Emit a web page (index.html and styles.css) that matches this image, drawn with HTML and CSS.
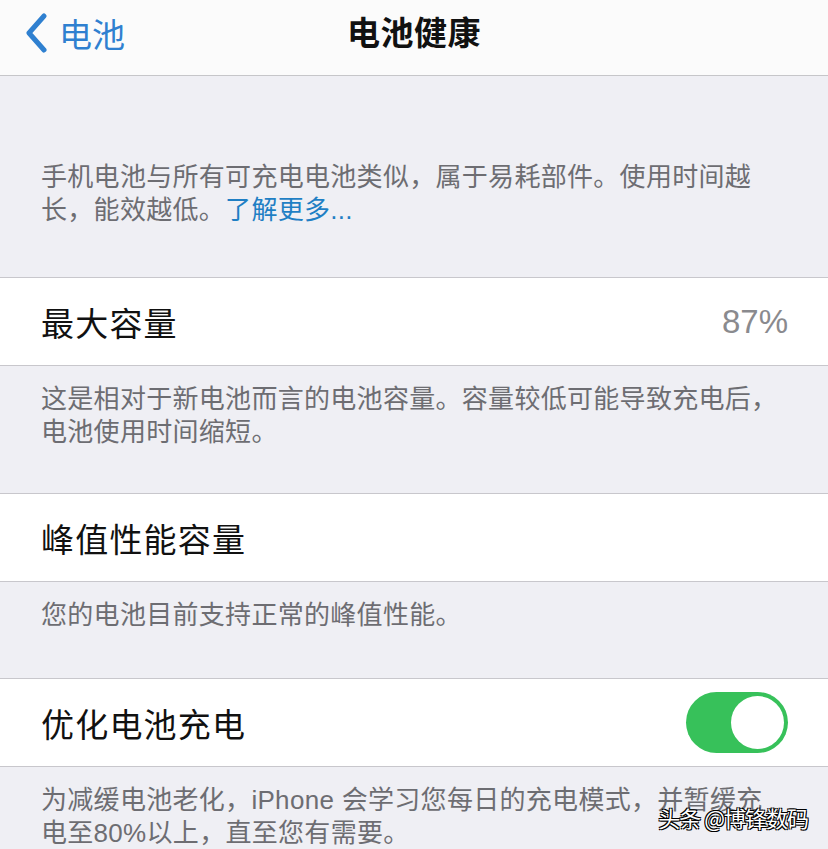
FILE: index.html
```html
<!DOCTYPE html>
<html lang="zh-CN">
<head>
    <meta charset="UTF-8">
    <meta name="viewport" content="width=device-width, initial-scale=1.0">
    <title>电池健康</title>
    <link rel="stylesheet" href="styles.css">
</head>
<body>
    <div class="screen">
        <div class="nav-bar">
            <a class="back-link" href="#">
                <svg class="back-icon" viewBox="0 0 24 40" width="24" height="40">
                    <path d="M20 3 L5 20 L20 37" fill="none" stroke="#2f80d0" stroke-width="5" stroke-linecap="round" stroke-linejoin="round"/>
                </svg>
                <span>电池</span>
            </a>
            <h1>电池健康</h1>
        </div>

        <div class="note note-intro">
            手机电池与所有可充电电池类似，属于易耗部件。使用时间越长，能效越低。<a href="#">了解更多...</a>
        </div>

        <div class="cell">
            <span class="cell-title">最大容量</span>
            <span class="cell-value">87%</span>
        </div>
        <div class="note">
            这是相对于新电池而言的电池容量。容量较低可能导致充电后，电池使用时间缩短。
        </div>

        <div class="cell">
            <span class="cell-title">峰值性能容量</span>
        </div>
        <div class="note note-single">
            您的电池目前支持正常的峰值性能。
        </div>

        <div class="cell">
            <span class="cell-title">优化电池充电</span>
            <label class="switch">
                <input type="checkbox" checked>
                <span class="knob"></span>
            </label>
        </div>
        <div class="note">
            为减缓电池老化，iPhone 会学习您每日的充电模式，并暂缓充电至80%以上，直至您有需要。
        </div>

        <div class="watermark">头条 @博锋数码</div>
    </div>
</body>
</html>
```

FILE: styles.css
```css
body {
    margin: 0;
    background-color: #efeff4;
    font-family: "Noto Sans CJK SC", "Noto Sans", sans-serif;
}

.screen {
    position: relative;
    width: 828px;
    height: 849px;
    overflow: hidden;
    background-color: #efeff4;
}

.nav-bar {
    height: 75px;
    background-color: #fbfbfb;
    border-bottom: 1px solid #c6c6c9;
    display: flex;
    align-items: center;
    justify-content: center;
    position: relative;
}

.nav-bar h1 {
    margin: 0;
    font-size: 33px;
    font-weight: 700;
    color: #111;
    letter-spacing: 0.5px;
    transform: translateY(-7px);
}

.back-link {
    position: absolute;
    left: 24px;
    top: 9px;
    display: flex;
    align-items: center;
    gap: 11px;
    text-decoration: none;
    color: #2f80d0;
    font-size: 33px;
}

.back-icon {
    display: block;
}

.note {
    padding: 17px 40px 44px 41px;
    font-family: "Liberation Sans", "Noto Sans CJK SC", sans-serif;
    font-size: 26px;
    line-height: 33px;
    color: #6d6d72;
    letter-spacing: 0.3px;
}

.note-intro {
    padding-top: 85px;
    padding-bottom: 50px;
}

.note-single {
    padding-bottom: 46px;
}

.note a {
    color: #1f7fc4;
    text-decoration: none;
}

.cell {
    height: 87px;
    background-color: #fff;
    border-top: 1px solid #c8c7cc;
    border-bottom: 1px solid #c8c7cc;
    display: flex;
    align-items: center;
    justify-content: space-between;
    padding: 0 40px 0 41px;
}

.cell-title {
    font-size: 33px;
    color: #111;
    letter-spacing: 1.2px;
}

.cell-value {
    font-size: 33px;
    color: #8a8a8e;
    font-family: "Liberation Sans", "Noto Sans", sans-serif;
}

.switch {
    position: relative;
    width: 102px;
    height: 61px;
}

.switch input {
    display: none;
}

.knob {
    position: absolute;
    inset: 0;
    border-radius: 31px;
    background-color: #37c15a;
}

.knob::after {
    content: "";
    position: absolute;
    right: 4px;
    top: 4px;
    width: 53px;
    height: 53px;
    border-radius: 50%;
    background-color: #fff;
}

.watermark {
    position: absolute;
    right: 20px;
    bottom: 16px;
    font-size: 22px;
    letter-spacing: -1px;
    color: #fff;
    text-shadow: -1px -1px 0 #000, 1px -1px 0 #000, -1px 1px 0 #000, 1px 1px 0 #000;
}
```
